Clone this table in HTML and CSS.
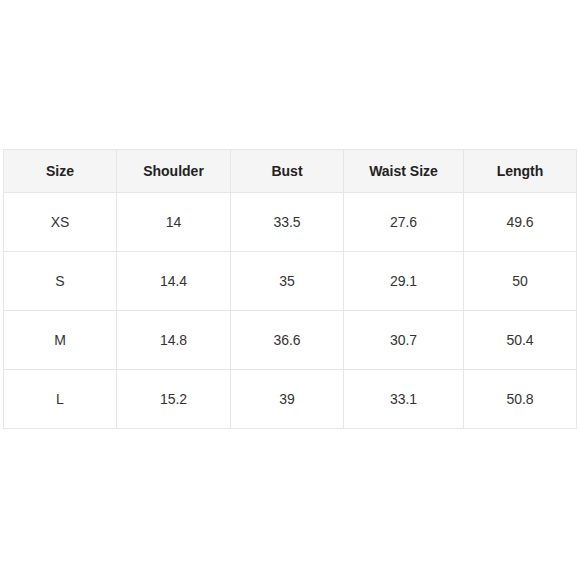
FILE: index.html
```html
<!DOCTYPE html>
<html>
<head>
<meta charset="utf-8">
<link rel="stylesheet" href="styles.css">
</head>
<body>
<div class="page">
  <table class="size-table">
    <colgroup>
      <col class="c1"><col class="c2"><col class="c3"><col class="c4"><col class="c5">
    </colgroup>
    <thead>
      <tr><th>Size</th><th>Shoulder</th><th>Bust</th><th>Waist Size</th><th>Length</th></tr>
    </thead>
    <tbody>
      <tr><td>XS</td><td>14</td><td>33.5</td><td>27.6</td><td>49.6</td></tr>
      <tr><td>S</td><td>14.4</td><td>35</td><td>29.1</td><td>50</td></tr>
      <tr><td>M</td><td>14.8</td><td>36.6</td><td>30.7</td><td>50.4</td></tr>
      <tr><td>L</td><td>15.2</td><td>39</td><td>33.1</td><td>50.8</td></tr>
    </tbody>
  </table>
</div>
</body>
</html>
```
FILE: styles.css
```css
html, body {
  margin: 0;
  padding: 0;
  background: #ffffff;
}
.page {
  width: 580px;
  height: 580px;
  padding: 149px 0 0 3px;
  box-sizing: border-box;
}
.size-table {
  border-collapse: collapse;
  table-layout: fixed;
  width: 573px;
  font-family: "Liberation Sans", Arial, sans-serif;
  font-size: 14px;
  color: #333333;
}
.c1 { width: 113px; }
.c2 { width: 114px; }
.c3 { width: 113px; }
.c4 { width: 120px; }
.c5 { width: 113px; }
.size-table th,
.size-table td {
  border: 1px solid #e6e6e6;
  text-align: center;
  vertical-align: middle;
  padding: 0;
}
.size-table th {
  background: #f5f5f5;
  font-weight: bold;
  height: 42px;
  color: #222222;
}
.size-table td {
  height: 58px;
}
```
